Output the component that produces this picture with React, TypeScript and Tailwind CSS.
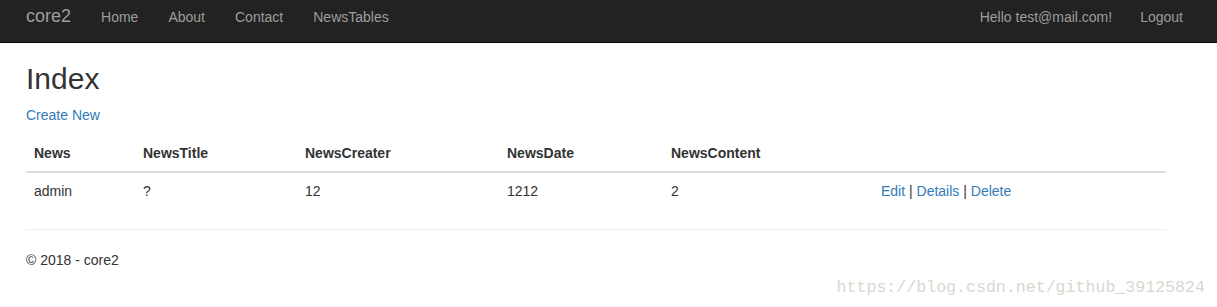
export default function App() {
  const rows = [
    {
      news: "admin",
      title: "?",
      creater: "12",
      date: "1212",
      content: "2",
    },
  ];

  return (
    <div className="relative min-h-[307px] bg-white text-[14px] leading-[20px] text-[#333333] font-['Liberation_Sans',Arial,sans-serif]">

      <nav className="h-[43px] bg-[#222222] border-b border-[#080808]">
        <div className="flex h-full pl-[11px] pr-[19px]">
          <a className="px-[15px] pt-[6px] text-[18px] leading-[20px] text-[#9d9d9d]">
            core2
          </a>
          <ul className="flex">
            {["Home", "About", "Contact", "NewsTables"].map((item) => (
              <li key={item}>
                <a className="block px-[15px] pt-[7px] text-[#9d9d9d]">
                  {item}
                </a>
              </li>
            ))}
          </ul>
          <ul className="flex ml-auto">
            <li>
              <a className="block pl-[15px] pr-[13px] pt-[7px] text-[#9d9d9d]">
                Hello test@mail.com!
              </a>
            </li>
            <li>
              <a className="block px-[15px] pt-[7px] text-[#9d9d9d]">
                Logout
              </a>
            </li>
          </ul>
        </div>
      </nav>

      <div className="w-[1140px] ml-[26px]">

        <h2 className="mt-[19px] mb-[10px] text-[30px] leading-[33px] font-normal">
          Index
        </h2>

        <p className="mb-[10px]">
          <a className="text-[#337ab7]">Create New</a>
        </p>

        <table className="w-full border-collapse mb-[20px] text-left">
          <thead>
            <tr>
              <th className="w-[109px] p-[8px] font-bold border-b-2 border-[#dddddd]">
                News
              </th>
              <th className="w-[162px] p-[8px] font-bold border-b-2 border-[#dddddd]">
                NewsTitle
              </th>
              <th className="w-[202px] p-[8px] font-bold border-b-2 border-[#dddddd]">
                NewsCreater
              </th>
              <th className="w-[164px] p-[8px] font-bold border-b-2 border-[#dddddd]">
                NewsDate
              </th>
              <th className="w-[210px] p-[8px] font-bold border-b-2 border-[#dddddd]">
                NewsContent
              </th>
              <th className="p-[8px] border-b-2 border-[#dddddd]"></th>
            </tr>
          </thead>
          <tbody>
            {rows.map((row, i) => (
              <tr key={i}>
                <td className="p-[8px]">{row.news}</td>
                <td className="p-[8px]">{row.title}</td>
                <td className="p-[8px]">{row.creater}</td>
                <td className="p-[8px]">{row.date}</td>
                <td className="p-[8px]">{row.content}</td>
                <td className="p-[8px]">
                  <a className="text-[#337ab7]">Edit</a> |{" "}
                  <a className="text-[#337ab7]">Details</a> |{" "}
                  <a className="text-[#337ab7]">Delete</a>
                </td>
              </tr>
            ))}
          </tbody>
        </table>

        <hr className="border-0 border-t border-[#eeeeee] mb-[20px]" />

        <footer>
          <p className="mb-[10px]">© 2018 - core2</p>
        </footer>

      </div>

      <div className="absolute right-[12px] bottom-[9px] text-[16.6px] leading-[20px] text-[#d8d8d0] font-['Liberation_Mono',monospace]">
        https://blog.csdn.net/github_39125824
      </div>

    </div>
  );
}
